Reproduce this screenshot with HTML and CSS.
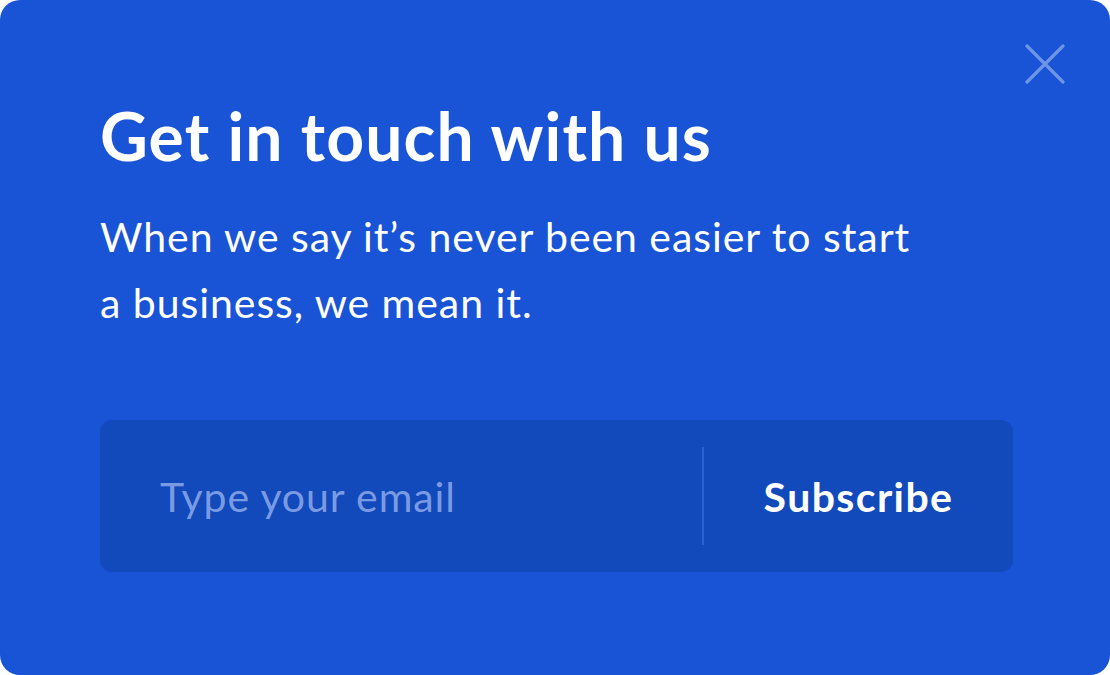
FILE: index.html
```html
<!DOCTYPE html>
<html lang="en">
<head>
<meta charset="utf-8">
<title>Get in touch</title>
<link rel="stylesheet" href="styles.css">
</head>
<body>
<div class="card">
  <button class="close" aria-label="Close">
    <svg width="40" height="40" viewBox="0 0 40 40"><path d="M2 2 L38 38 M38 2 L2 38" stroke="#6f95e6" stroke-width="3.2" stroke-linecap="round" fill="none"/></svg>
  </button>
  <h1 class="title">Get in touch with us</h1>
  <p class="lead">When we say it’s never been easier to start<br>a business, we mean it.</p>
  <form class="subscribe">
    <div class="field">Type your email</div>
    <div class="divider"></div>
    <button class="submit" type="button">Subscribe</button>
  </form>
</div>
</body>
</html>
```
FILE: styles.css
```css
html, body { margin: 0; padding: 0; background: #ffffff; }
body { font-family: "Lato", "Open Sans", sans-serif; }
.card {
  position: relative;
  box-sizing: border-box;
  width: 1110px;
  height: 675px;
  background: #1953d6;
  border-radius: 20px;
  padding: 98px 97px 0 100px;
  color: #ffffff;
}
.close {
  position: absolute;
  top: 44px;
  right: 45px;
  width: 40px;
  height: 40px;
  padding: 0;
  border: 0;
  background: none;
}
.close svg { display: block; }
.title {
  margin: 0;
  font-size: 66px;
  font-weight: 700;
  line-height: 76px;
  letter-spacing: 1.1px;
}
.lead {
  margin: 30px 0 0;
  font-size: 41px;
  font-weight: 400;
  line-height: 66px;
  letter-spacing: 0.95px;
}
.subscribe {
  margin-top: 84px;
  display: flex;
  align-items: center;
  height: 152px;
  background: #1249bb;
  border-radius: 12px;
}
.field {
  flex: 1;
  padding-left: 60px;
  font-size: 41px;
  letter-spacing: 0.9px;
  color: #7a9be3;
}
.divider {
  width: 2px;
  height: 98px;
  background: #2c61d6;
}
.submit {
  width: 309px;
  padding: 0;
  border: 0;
  background: none;
  color: #ffffff;
  font-family: inherit;
  font-size: 41px;
  font-weight: 700;
  letter-spacing: 1.4px;
  text-align: center;
}
```
